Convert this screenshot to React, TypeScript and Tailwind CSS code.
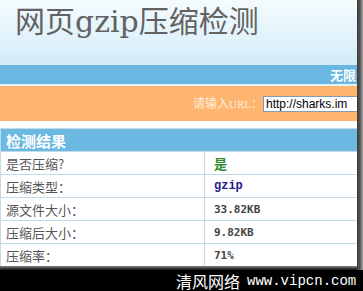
import React from "react";

const rows: { label: string; value: string; cls: string }[] = [
  { label: "是否压缩?", value: "是", cls: "text-[#2e8b2e] font-bold text-[13px] [font-family:'Noto_Sans_CJK_SC',sans-serif]" },
  { label: "压缩类型：", value: "gzip", cls: "text-[#1c1c8c] font-bold text-[12px] [font-family:'Liberation_Mono',monospace]" },
  { label: "源文件大小：", value: "33.82KB", cls: "text-[#444] font-bold text-[11px] [font-family:'DejaVu_Sans_Mono',monospace]" },
  { label: "压缩后大小：", value: "9.82KB", cls: "text-[#444] font-bold text-[11px] [font-family:'DejaVu_Sans_Mono',monospace]" },
  { label: "压缩率：", value: "71%", cls: "text-[#444] font-bold text-[11px] [font-family:'DejaVu_Sans_Mono',monospace]" },
];

export default function App() {
  return (
    <div className="w-[363px] h-[291px] bg-black overflow-hidden [font-family:'Noto_Sans_CJK_SC',sans-serif]">
      <div className="flex h-[266px]">
        <div className="w-[357px] h-[266px] overflow-hidden bg-white flex flex-col">
          <div className="h-[65px] bg-gradient-to-b from-[#f5fbfe] to-[#d2ecf8] pl-[15px] pt-[7px]">
            <div className="text-[30px] leading-[30px] text-[#626262] whitespace-nowrap [font-family:'DejaVu_Serif','Noto_Sans_CJK_SC',serif]">
              网页gzip压缩检测
            </div>
          </div>
          <div className="h-[20px] bg-[#6ab8e1] pl-[330px] flex items-center whitespace-nowrap text-white font-bold text-[13px] leading-none">
            无限资源
          </div>
          <div className="h-[2px] bg-[#e3f1f8]" />
          <div className="h-[35px] bg-[#feb570] flex items-center whitespace-nowrap">
            <span className="ml-[193px] w-[70px] shrink-0 text-[12px] text-[#fdeedd] leading-none">
              请输入<span className="text-[11px] [font-family:'Liberation_Serif',serif]">URL</span>：
            </span>
            <div className="w-[120px] shrink-0 h-[16px] bg-white border border-[#7f9db9] flex items-center pl-[2px] text-[12px] text-black leading-none [font-family:'Liberation_Sans',sans-serif]">
              http://sharks.im
            </div>
          </div>
          <div className="h-[7px] bg-white" />
          <div className="border-t border-l border-[#c3dbe8]">
            <div className="h-[22px] bg-[#6bb8e2] flex items-center pl-[5px] text-white font-bold text-[15px] leading-none">
              检测结果
            </div>
            {rows.map((r) => (
              <div key={r.label} className="flex h-[23px] border-t border-[#c3dbe8]">
                <div className="w-[204px] border-r border-[#c3dbe8] flex items-center pl-[5px] text-[13px] text-[#555] leading-none">
                  {r.label}
                </div>
                <div className={"flex-1 flex items-center pl-[9px] leading-none " + r.cls}>{r.value}</div>
              </div>
            ))}
          </div>
        </div>
        <div className="w-[6px] h-[270px] bg-gradient-to-r from-[#3a3a3a] via-[#555] to-[#aaa]" />
      </div>
      <div className="h-[4px] w-[360px] bg-gradient-to-b from-[#888] to-[#111]" />
      <div className="h-[21px] flex items-center whitespace-nowrap pl-[176px] text-white leading-none">
        <span className="text-[16px]">清风网络</span>
        <span className="ml-[7px] text-[14px] [font-family:'Liberation_Mono',monospace]">www.vipcn.com</span>
      </div>
    </div>
  );
}
